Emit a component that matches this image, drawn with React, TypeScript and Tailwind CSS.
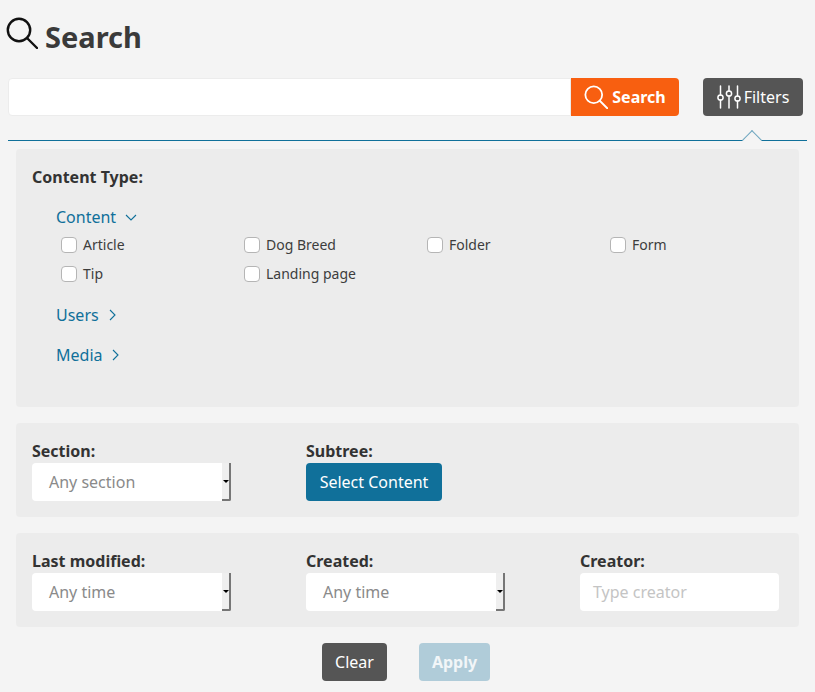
import React from "react";

function SearchIcon({ className, stroke }: { className: string; stroke: string }) {
  return (
    <svg viewBox="0 0 32 32" fill="none" className={className} stroke={stroke} strokeWidth="2.4" strokeLinecap="round">
      <circle cx="13" cy="13" r="11.2" />
      <path d="M21 21 L31 31" />
    </svg>
  );
}

function FilterIcon() {
  return (
    <svg viewBox="0 0 24 24" width="24" height="24" fill="none" stroke="#fff" strokeWidth="1.5" strokeLinecap="round">
      <path d="M3.5 1v9M3.5 15v8M12 1v5M12 11v12M20.5 1v10M20.5 16v7" />
      <circle cx="3.5" cy="12.5" r="2.6" />
      <circle cx="12" cy="8.5" r="2.6" />
      <circle cx="20.5" cy="13.5" r="2.6" />
    </svg>
  );
}

function Check({ label }: { label: string }) {
  return (
    <label className="flex h-[29px] items-center">
      <span className="h-4 w-4 rounded-[4px] border border-[#b5b5b5] bg-white" />
      <span className="ml-[6px] text-[14px] text-[#3d3d3d]">{label}</span>
    </label>
  );
}

function FakeSelect({ text }: { text: string }) {
  return (
    <div className="flex h-[38px] w-[199px] items-center rounded-[4px] bg-white pl-[17px] text-[16px] text-[#8a8a8a] relative">
      {text}
      <div className="absolute right-0 top-0 flex h-[38px] w-[9px] items-center justify-center rounded-br-[2px] border-r-2 border-b-2 border-[#767676] bg-[#efefef]">
        <span className="mt-px h-0 w-0 border-x-[3px] border-t-[3px] border-x-transparent border-t-black" />
      </div>
    </div>
  );
}

function Chevron({ d }: { d: string }) {
  return (
    <svg width="12" height="12" viewBox="0 0 12 12" fill="none" stroke="#10709a" strokeWidth="1.1">
      <path d={d} />
    </svg>
  );
}

export default function App() {
  const font = { fontFamily: '"Noto Sans", sans-serif' };
  return (
    <div style={font} className="h-[692px] w-[815px] overflow-hidden bg-[#f4f4f4] px-2 text-[#333]">
      <div className="flex h-[78px] items-start">
        <SearchIcon className="mt-[17px] ml-[-2px] h-8 w-8" stroke="#111" />
        <h1 className="mt-[17px] ml-[7px] text-[29px] leading-10 font-bold text-[#3a3a3a]">Search</h1>
      </div>

      <div className="flex">
        <div className="h-[38px] w-[563px] rounded-l-[4px] border border-[#ececec] bg-white" />
        <button className="flex h-[38px] w-[108px] items-center justify-center gap-[4px] rounded-r-[4px] bg-[#f85f10] text-[16px] font-bold text-white">
          <SearchIcon className="h-6 w-6" stroke="#fff" />
          Search
        </button>
        <button className="ml-6 flex h-[38px] w-[100px] items-center justify-center gap-[3px] rounded-[4px] bg-[#555] text-[16px] text-white">
          <FilterIcon />
          Filters
        </button>
      </div>

      <div className="relative mt-6 border-t border-[#10709a]">
        <div className="absolute top-[-8px] left-[737px] h-[14px] w-[14px] rotate-45 border-t border-l border-[#6fa6bf] bg-[#f4f4f4] scale-x-[1.0]" />
      </div>

      <div className="relative mx-2 mt-2 h-[258px] rounded-[4px] bg-[#ececec] px-4 pt-[16px]">
        <div className="text-[16px] leading-6 font-bold">Content Type:</div>
        <div className="mt-[16px] ml-6 flex h-6 items-center gap-[9px] text-[16px] text-[#10709a]">
          Content <Chevron d="M1 4l5 5 5-5" />
        </div>
        <div className="mt-[1px] ml-[29px] grid w-[732px] grid-cols-4">
          {["Article", "Dog Breed", "Folder", "Form", "Tip", "Landing page"].map((t) => (
            <Check key={t} label={t} />
          ))}
        </div>
        <div className="mt-[15px] ml-6 flex h-6 items-center gap-[8px] text-[16px] text-[#10709a]">
          Users <Chevron d="M3 1l5 5-5 5" />
        </div>
        <div className="mt-4 ml-6 flex h-6 items-center gap-[8px] text-[16px] text-[#10709a]">
          Media <Chevron d="M3 1l5 5-5 5" />
        </div>
      </div>

      <div className="mx-2 mt-4 flex h-[94px] rounded-[4px] bg-[#ececec] px-4 pt-[16px]">
        <div className="w-[274px]">
          <div className="text-[16px] leading-6 font-bold">Section:</div>
          <FakeSelect text="Any section" />
        </div>
        <div>
          <div className="text-[16px] leading-6 font-bold">Subtree:</div>
          <button className="h-[38px] w-[136px] rounded-[4px] bg-[#10709a] text-[16px] text-white">Select Content</button>
        </div>
      </div>

      <div className="mx-2 mt-4 flex h-[94px] rounded-[4px] bg-[#ececec] px-4 pt-[16px]">
        <div className="w-[274px]">
          <div className="text-[16px] leading-6 font-bold">Last modified:</div>
          <FakeSelect text="Any time" />
        </div>
        <div className="w-[274px]">
          <div className="text-[16px] leading-6 font-bold">Created:</div>
          <FakeSelect text="Any time" />
        </div>
        <div>
          <div className="text-[16px] leading-6 font-bold">Creator:</div>
          <div className="flex h-[38px] w-[199px] items-center rounded-[4px] bg-white pl-[13px] text-[16px] text-[#c4c4c4]">Type creator</div>
        </div>
      </div>

      <div className="mt-4 flex pl-[314px]">
        <button className="h-[38px] w-[65px] rounded-[4px] bg-[#555] text-[16px] text-white">Clear</button>
        <button className="ml-8 h-[38px] w-[71px] rounded-[4px] bg-[#b0ccd9] text-[16px] font-bold text-[#f2f6f8]">Apply</button>
      </div>
    </div>
  );
}
